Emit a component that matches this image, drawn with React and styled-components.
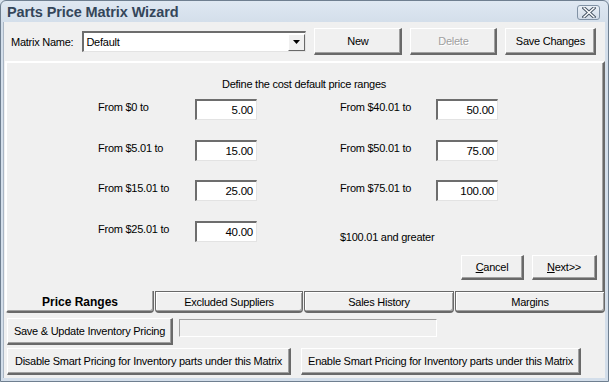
import React from 'react';
import styled, { createGlobalStyle, css } from 'styled-components';

const Global = createGlobalStyle`
  html, body { margin: 0; padding: 0; background: #d9e3ee; }
  body { font-family: "Liberation Sans", Arial, sans-serif; font-size: 11px; letter-spacing: -0.25px; color: #000; }
  * { box-sizing: border-box; }
`;

const Window = styled.div`
  width: 609px;
  height: 382px;
  display: flex;
  flex-direction: column;
  background: linear-gradient(#dfe8f2, #d3deea 22px, #d3deea);
  border: 1px solid #6f7f90;
  border-radius: 6px 6px 0 0;
  overflow: hidden;
`;

const TitleBar = styled.div`
  height: 21px;
  display: flex;
  align-items: center;
  justify-content: space-between;
  padding: 0 8px 0 6px;
`;

const Title = styled.div`
  font-family: "Liberation Sans", Arial, sans-serif;
  font-size: 14.5px;
  font-weight: bold;
  color: #34465a;
  letter-spacing: -0.1px;
`;

const CloseBtn = styled.div`
  width: 23px;
  height: 15px;
  margin-top: 2px;
  border: 1px solid #8192a5;
  border-radius: 3px;
  background: linear-gradient(#e9eff6, #d2dce8);
  display: flex;
  align-items: center;
  justify-content: center;
`;

const Body = styled.div`
  flex: 1;
  margin: 0 3px 3px 2px;
  background: #f0f0f0;
  border-left: 1px solid #aab6c4;
  display: flex;
  flex-direction: column;
`;

const TopRow = styled.div`
  display: flex;
  align-items: center;
  height: 27px;
  margin-top: 6px;
  padding-left: 7px;
`;

const Label = styled.span`
  white-space: nowrap;
`;

const Combo = styled.div`
  width: 224px;
  height: 21px;
  margin-left: 9px;
  background: #fff;
  border-style: solid;
  border-width: 2px 1px 1px 2px;
  border-color: #6d6d6d #e3e3e3 #e3e3e3 #6d6d6d;
  display: flex;
  align-items: center;
  justify-content: space-between;
  padding-left: 2px;
`;

const DropBtn = styled.div`
  width: 17px;
  height: 17px;
  background: #f0f0f0;
  border-style: solid;
  border-width: 1px;
  border-color: #fff #696969 #696969 #fff;
  display: flex;
  align-items: center;
  justify-content: center;
`;

const Button = styled.div`
  width: ${p => p.$w}px;
  height: ${p => p.$h || 27}px;
  margin-left: ${p => p.$ml || 0}px;
  background: #f0f0f0;
  border-style: solid;
  border-width: 1px 2px 2px 1px;
  border-color: #fff #696969 #696969 #fff;
  box-shadow: inset -1px -1px 0 #a0a0a0;
  display: flex;
  align-items: center;
  justify-content: center;
  white-space: nowrap;
  color: ${p => (p.$disabled ? '#a0a0a0' : '#000')};
  ${p => p.$disabled && css`text-shadow: 1px 1px 0 #fff;`}
`;

const Panel = styled.div`
  margin: 6px 0 0 1px;
  height: 230px;
  border-style: solid;
  border-width: 2px 2px 0 2px;
  border-color: #fff #696969 #696969 #fff;
  box-shadow: inset -1px 0 0 #a0a0a0;
  display: flex;
  flex-direction: column;
  align-items: stretch;
  padding-top: 15px;
`;

const Heading = styled.div`
  text-align: center;
  line-height: 13px;
  padding-right: 2px;
`;

const Grid = styled.div`
  display: grid;
  grid-template-columns: 97px 62px 83px 96px 62px;
  grid-auto-rows: 21px;
  row-gap: 19.5px;
  margin-top: 8px;
  padding-left: 91px;
`;

const Cell = styled.div`
  padding-top: ${p => p.$pt ?? 2}px;
  white-space: nowrap;
`;

const Input = styled.div`
  height: 21px;
  background: #fff;
  border-style: solid;
  border-width: 2px 1px 1px 2px;
  border-color: #6d6d6d #e3e3e3 #e3e3e3 #6d6d6d;
  text-align: right;
  padding: 3px 3px 0 0;
  font-size: 11.5px;
`;

const Actions = styled.div`
  display: flex;
  justify-content: flex-end;
  gap: 8px;
  margin-top: 13px;
  padding-right: 6px;
`;

const Tabs = styled.div`
  display: grid;
  grid-template-columns: 149px 149px 151px 1fr;
  height: 22px;
  margin: 0 0 0 1px;
`;

const Tab = styled.div`
  display: flex;
  align-items: center;
  justify-content: center;
  padding-top: 1px;
  border-style: solid;
  border-color: #696969;
  border-width: 0 1px 2px 1px;
  border-radius: 0 0 4px 4px;
  ${p =>
    p.$active
      ? css`
          font-weight: bold;
          font-size: 12px;
          letter-spacing: 0;
          border-left: 2px solid #fff;
          box-shadow: inset -1px -1px 0 #a0a0a0;
        `
      : css`
          border-top: 1px solid #696969;
          margin-left: 1px;
          box-shadow: inset 1px 1px 0 #fff, inset -1px -1px 0 #a0a0a0;
        `}
`;

const Bottom = styled.div`
  display: flex;
  flex-direction: column;
  gap: 3px;
  padding: 5px 0 0 3px;
`;

const BRow = styled.div`
  display: flex;
  align-items: flex-start;
`;

const Progress = styled.div`
  width: 258px;
  height: 18px;
  margin: 1px 0 0 6px;
  border-style: solid;
  border-width: 1px;
  border-color: #a0a0a0 #fff #fff #a0a0a0;
  background: #f0f0f0;
`;

const U = styled.span`
  text-decoration: underline;
`;

const left = [
  ['From $0 to', '5.00'],
  ['From $5.01 to', '15.00'],
  ['From $15.01 to', '25.00'],
  ['From $25.01 to', '40.00'],
];
const right = [
  ['From $40.01 to', '50.00'],
  ['From $50.01 to', '75.00'],
  ['From $75.01 to', '100.00'],
];

export default function App() {
  return (
    <>
      <Global />
      <Window>
        <TitleBar>
          <Title>Parts Price Matrix Wizard</Title>
          <CloseBtn>
            <svg width="14" height="11" viewBox="0 0 14 11">
              <path d="M2 1 L12 10 M12 1 L2 10" stroke="#4a5868" strokeWidth="3.4" strokeLinecap="square" />
              <path d="M2 1 L12 10 M12 1 L2 10" stroke="#fff" strokeWidth="1.4" strokeLinecap="square" />
            </svg>
          </CloseBtn>
        </TitleBar>
        <Body>
          <TopRow>
            <Label>Matrix Name:</Label>
            <Combo>
              <span>Default</span>
              <DropBtn>
                <svg width="7" height="4" viewBox="0 0 7 4">
                  <path d="M0 0 H7 L3.5 4 Z" fill="#000" />
                </svg>
              </DropBtn>
            </Combo>
            <Button $w={88} $ml={8}>New</Button>
            <Button $w={87} $ml={8} $disabled>Delete</Button>
            <Button $w={91} $ml={8}>Save Changes</Button>
          </TopRow>
          <Panel>
            <Heading>Define the cost default price ranges</Heading>
            <Grid>
              {left.map(([l, v], i) => (
                <React.Fragment key={l}>
                  <Cell style={{ gridRow: i + 1, gridColumn: 1 }}>{l}</Cell>
                  <Input style={{ gridRow: i + 1, gridColumn: 2 }}>{v}</Input>
                </React.Fragment>
              ))}
              {right.map(([l, v], i) => (
                <React.Fragment key={l}>
                  <Cell style={{ gridRow: i + 1, gridColumn: 4 }}>{l}</Cell>
                  <Input style={{ gridRow: i + 1, gridColumn: 5 }}>{v}</Input>
                </React.Fragment>
              ))}
              <Cell $pt={10} style={{ gridRow: 4, gridColumn: '4 / 6' }}>$100.01 and greater</Cell>
            </Grid>
            <Actions>
              <Button $w={63} $h={25}><span><U>C</U>ancel</span></Button>
              <Button $w={65} $h={25}><span><U>N</U>ext&gt;&gt;</span></Button>
            </Actions>
          </Panel>
          <Tabs>
            <Tab $active>Price Ranges</Tab>
            <Tab>Excluded Suppliers</Tab>
            <Tab>Sales History</Tab>
            <Tab>Margins</Tab>
          </Tabs>
          <Bottom>
            <BRow>
              <Button $w={166} $h={27}>Save &amp; Update Inventory Pricing</Button>
              <Progress />
            </BRow>
            <BRow>
              <Button $w={284} $h={27}>Disable Smart Pricing for Inventory parts under this Matrix</Button>
              <Button $w={280} $h={27} $ml={10}>Enable Smart Pricing for Inventory parts under this Matrix</Button>
            </BRow>
          </Bottom>
        </Body>
      </Window>
    </>
  );
}
